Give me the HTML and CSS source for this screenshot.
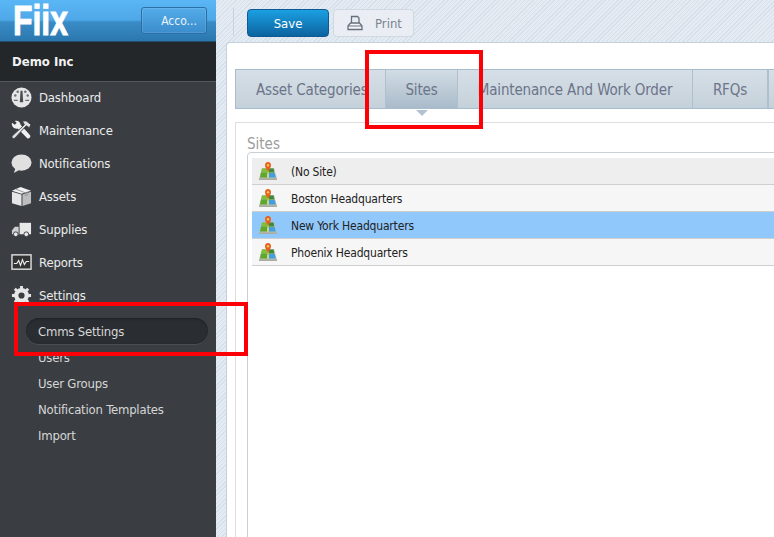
FILE: index.html
```html
<!DOCTYPE html>
<html lang="en">
<head>
<meta charset="utf-8">
<title>Fiix Settings</title>
<link rel="stylesheet" href="styles.css">
</head>
<body>
<svg class="defs" width="0" height="0" aria-hidden="true">
  <symbol id="map" viewBox="0 0 18 18">
    <path d="M3 6h12l3 11H0z" fill="#b9bdb0"/>
    <path d="M3 6.500h5v4H2z" fill="#7fc03a"/>
    <path d="M2 10.500h6v5H1z" fill="#5fa830"/>
    <path d="M8 8.500h3v3H8z" fill="#a7d04a"/>
    <path d="M10 6.500h4.500l.8 4H10z" fill="#3f8a3a"/>
    <path d="M10 11h5.500l1.300 4.500H10z" fill="#3f9fe0"/>
    <path d="M8 12h2v3.500H8z" fill="#d8d27a"/>
    <path d="M9 0c2 0 3 1.500 3 3.200 0 2.300-2 4-3 7.300-1-3.300-3-5-3-7.300C6 1.500 7 0 9 0z" fill="#e8601c"/>
    <circle cx="9" cy="3.300" r="1.200" fill="#f8c860"/>
    <path d="M0 16.500h18V18H0z" fill="#a8aca0"/>
  </symbol>
</svg>
<div class="app">
  <aside class="sidebar">
    <header class="brand">
      <svg class="logo" viewBox="0 0 58 43"><text class="logo-text" x="0" y="35" textLength="55" lengthAdjust="spacingAndGlyphs">Fiix</text></svg>
      <button class="account">Acco...</button>
    </header>
    <div class="company">Demo Inc</div>
    <nav class="nav">
      <a class="nav-item"><svg class="nav-icon" viewBox="0 0 22 22"><circle cx="11" cy="11" r="10.500" fill="#e6e6e6"/><path d="M10 4h2l.8 12h-3.600z" fill="#4a4e52"/><circle cx="4.500" cy="9" r="1.300" fill="#6a6e72"/><circle cx="7" cy="5" r="1.300" fill="#6a6e72"/><circle cx="15" cy="5" r="1.300" fill="#6a6e72"/><circle cx="17.500" cy="9" r="1.300" fill="#6a6e72"/><path d="M3 14h4M15 14h4" stroke="#6a6e72" stroke-width="1.200"/></svg>Dashboard</a>
      <a class="nav-item"><svg class="nav-icon" viewBox="0 0 22 22"><path d="M1 3l3 2 2-2-2-2c3-1 6 1 6 4l10 11c1 2-1 4-3 3L7 9C4 10 0 7 1 3z" fill="#f0f0f0"/><path d="M12 1h4l5 4-2 3-3-2-12 13c-2 1-3 0-3-2L14 5z" fill="#e2e2e2" stroke="#3a3e43" stroke-width=".9"/></svg>Maintenance</a>
      <a class="nav-item"><svg class="nav-icon" viewBox="0 0 22 22"><ellipse cx="11" cy="10" rx="10.500" ry="8.500" fill="#e0e0e0"/><path d="M5 15l-2 6 7-4z" fill="#e0e0e0"/></svg>Notifications</a>
      <a class="nav-item"><svg class="nav-icon" viewBox="0 0 22 22"><path d="M1 6l10 3v12L1 18z" fill="#e6e6e6"/><path d="M12 9l9-3v12l-9 3z" fill="#bdbdbd"/><path d="M1 5l9-4 11 4-10 3z" fill="#f2f2f2"/><path d="M5 3.200l10 4v3l2-.7V6" fill="none" stroke="#999"/></svg>Assets</a>
      <a class="nav-item"><svg class="nav-icon" viewBox="0 0 22 22"><path d="M9 4h12v12H9z" fill="#e8e8e8"/><path d="M8 8H4l-3 4v4h7z" fill="#cfcfcf"/><circle cx="5" cy="16" r="2.500" fill="#e8e8e8" stroke="#3a3e43"/><circle cx="16" cy="16" r="2.500" fill="#e8e8e8" stroke="#3a3e43"/></svg>Supplies</a>
      <a class="nav-item"><svg class="nav-icon" viewBox="0 0 22 22"><rect x="1" y="3" width="20" height="15" fill="#333" stroke="#dedede" stroke-width="1.500"/><path d="M3 12h3l2-3 2 5 2-6 2 5 2-3h3" fill="none" stroke="#eee" stroke-width="1.200"/></svg>Reports</a>
      <a class="nav-item"><svg class="nav-icon" viewBox="0 0 22 22"><circle cx="11" cy="11" r="5.500" fill="none" stroke="#e6e6e6" stroke-width="4.500"/><path d="M11 1v20M1 11h20M4 4l14 14M18 4L4 18" stroke="#e6e6e6" stroke-width="3" stroke-dasharray="4 12"/></svg>Settings</a>
    </nav>
    <ul class="subnav">
      <li class="sub-item sub-active">Cmms Settings</li>
      <li class="sub-item">Users</li>
      <li class="sub-item">User Groups</li>
      <li class="sub-item">Notification Templates</li>
      <li class="sub-item">Import</li>
    </ul>
  </aside>
  <main class="main">
    <div class="toolbar">
      <button class="btn btn-save">Save</button>
      <button class="btn btn-print"><svg class="print-icon" viewBox="0 0 16 16"><path d="M4.500 8V1.500h6L12 3v5" fill="none" stroke="#66707c" stroke-width="1.300"/><path d="M3.500 8h9l2.500 3v3.500H1V11z" fill="#f4f6f9" stroke="#66707c" stroke-width="1.300"/><path d="M1 11h14" stroke="#66707c"/></svg>Print</button>
    </div>
    <section class="card">
      <div class="tabs">
        <div class="tab tab-first">Asset Categories</div>
        <div class="tab tab-active">Sites</div>
        <div class="tab tab-maint">Maintenance And Work Order</div>
        <div class="tab tab-rfq">RFQs</div>
        <div class="tab"></div>
      </div>
      <div class="panel">
        <div class="panel-title">Sites</div>
        <div class="listbox">
          <div class="row row-head"><svg class="row-icon"><use href="#map"/></svg>(No Site)</div>
          <div class="row"><svg class="row-icon"><use href="#map"/></svg>Boston Headquarters</div>
          <div class="row row-selected"><svg class="row-icon"><use href="#map"/></svg>New York Headquarters</div>
          <div class="row"><svg class="row-icon"><use href="#map"/></svg>Phoenix Headquarters</div>
        </div>
      </div>
    </section>
  </main>
</div>
<div class="mark mark-tab"></div>
<div class="mark mark-nav"></div>
</body>
</html>
```
FILE: styles.css
```css
* { box-sizing: border-box; }
html, body { margin: 0; height: 100%; overflow: hidden; }
body { font-family: "DejaVu Sans", sans-serif; font-stretch: condensed; position: relative; }
.defs { position: absolute; }
.app { display: flex; height: 537px; width: 774px; overflow: hidden; }

.sidebar { flex: 0 0 216px; background: #3a3e43; display: flex; flex-direction: column; }
.brand { flex: none; height: 43px; display: flex; align-items: center; justify-content: space-between; padding: 0 9px 0 13px;
  background: linear-gradient(#5ab6f5 0, #4fa8e8 20px, #3a8cc6 22px, #2a77ae 41px, #20262b 42px); }
.logo { width: 58px; height: 43px; flex: none; }
.logo-text { font: bold 43px "Liberation Sans", sans-serif; font-stretch: normal; fill: #fff; stroke: #fff; stroke-width: 1px; }
.account { width: 66px; height: 27px; margin-top: -2px; padding: 0 0 0 10px; border: 1px solid #2a6fa5; border-radius: 3px; font: 12px "DejaVu Sans", sans-serif; font-stretch: condensed; color: #e8f3fb;
  background: linear-gradient(#54ace9, #3b8ccb); box-shadow: inset 0 0 0 1px rgba(255,255,255,.1); }
.company { flex: none; height: 39px; padding: 0 12px; line-height: 38px; font-size: 13px; font-weight: bold; color: #f2f2f2;
  background: #23272a; border-bottom: 1px solid #55595d; }

.nav { display: flex; flex-direction: column; margin-top: -1px; }
.nav-item { height: 33px; display: flex; align-items: center; gap: 7px; padding-left: 11px; font-size: 13px; letter-spacing: -.15px; color: #ececec; }
.nav-icon { width: 21px; height: 21px; flex: none; }

.subnav { list-style: none; margin: 0; padding: 6px 8px 0 26px; display: flex; flex-direction: column; }
.sub-item { height: 26px; line-height: 28px; padding-left: 12px; font-size: 13px; letter-spacing: -.2px; color: #d6d6d6; }
.sub-active { border-radius: 13px; background: #2a2e32; box-shadow: inset 0 1px 2px #1e2124, 0 1px 0 #4a4e52; }

.main { flex: 1; min-width: 0; padding: 0 0 0 10px;
  background: repeating-linear-gradient(135deg, #e4ebf2 0 2px, #d6e0ea 2px 3px); display: flex; flex-direction: column; }
.toolbar { flex: none; height: 42px; display: flex; gap: 4px; padding: 9px 0 0 21px; position: relative; }
.toolbar::before { content: ""; position: absolute; left: 7px; top: 8px; height: 28px; width: 1px; background: #c8d2dc; }
.btn { height: 28px; border-radius: 4px; font: 13px "DejaVu Sans", sans-serif; font-stretch: condensed; padding: 0; }
.btn-save { width: 82px; color: #fff; border: 1px solid #0f5a94; background: linear-gradient(#1ba0e2, #0c639f); }
.btn-print { width: 81px; color: #7a838e; border: 1px solid #d0d8e0; background: #eaeef4; display: flex; align-items: center; justify-content: flex-start; gap: 12px; padding-left: 13px; }
.print-icon { width: 16px; height: 16px; }

.card { flex: none; width: 600px; height: 495px; background: #fff; border: 1px solid #c4d0dc; border-right: 0; border-bottom: 0; border-radius: 4px 0 0 0; padding: 26px 0 0 8px; }
.tabs { display: flex; height: 40px; width: 560px; border: 1px solid #a9bccc; border-width: 1px 0 1px 1px; background: linear-gradient(#d6dfe7, #c5d1da); }
.tab { height: 38px; line-height: 40px; font-size: 15px; letter-spacing: -.15px; color: #6c7489; text-align: center; border-right: 1px solid #aebfce; position: relative; white-space: nowrap; }
.tab-first { width: 150px; text-align: left; padding-left: 20px; }
.tab-active { width: 72px; background: linear-gradient(#d2dce4, #a9bbca); }
.tab-active::after { content: ""; position: absolute; left: 30px; top: 40px; border: 6px solid transparent; border-top: 6px solid #b4c2cf; border-bottom: 0; }
.tab-maint { width: 235px; }
.tab-rfq { width: 75px; }

.panel { margin-top: 13px; height: 500px; border: 1px solid #dedede; padding: 13px 0 0 11px; }
.panel-title { height: 16px; font-size: 15px; line-height: 16px; color: #9c9c9c; }
.listbox { height: 400px; border: 1px solid #c8cfd6; border-radius: 4px 0 0 0; padding: 5px 0 0 4px; }
.row { height: 27px; display: flex; align-items: center; gap: 14px; padding: 2px 0 0 7px; font-size: 12px; letter-spacing: -.18px; color: #222; background: #f6f6f6; border-bottom: 1px solid #cfcfcf; }
.row-head { background: #eeeeee; }
.row-selected { background: #90c8fb; }
.row-icon { width: 18px; height: 18px; flex: none; margin-top: -2px; }

.mark { position: absolute; border: 4px solid #fb0007; }
.mark-tab { left: 365px; top: 50px; width: 118px; height: 79px; }
.mark-nav { left: 14px; top: 302px; width: 234px; height: 54px; }
```
